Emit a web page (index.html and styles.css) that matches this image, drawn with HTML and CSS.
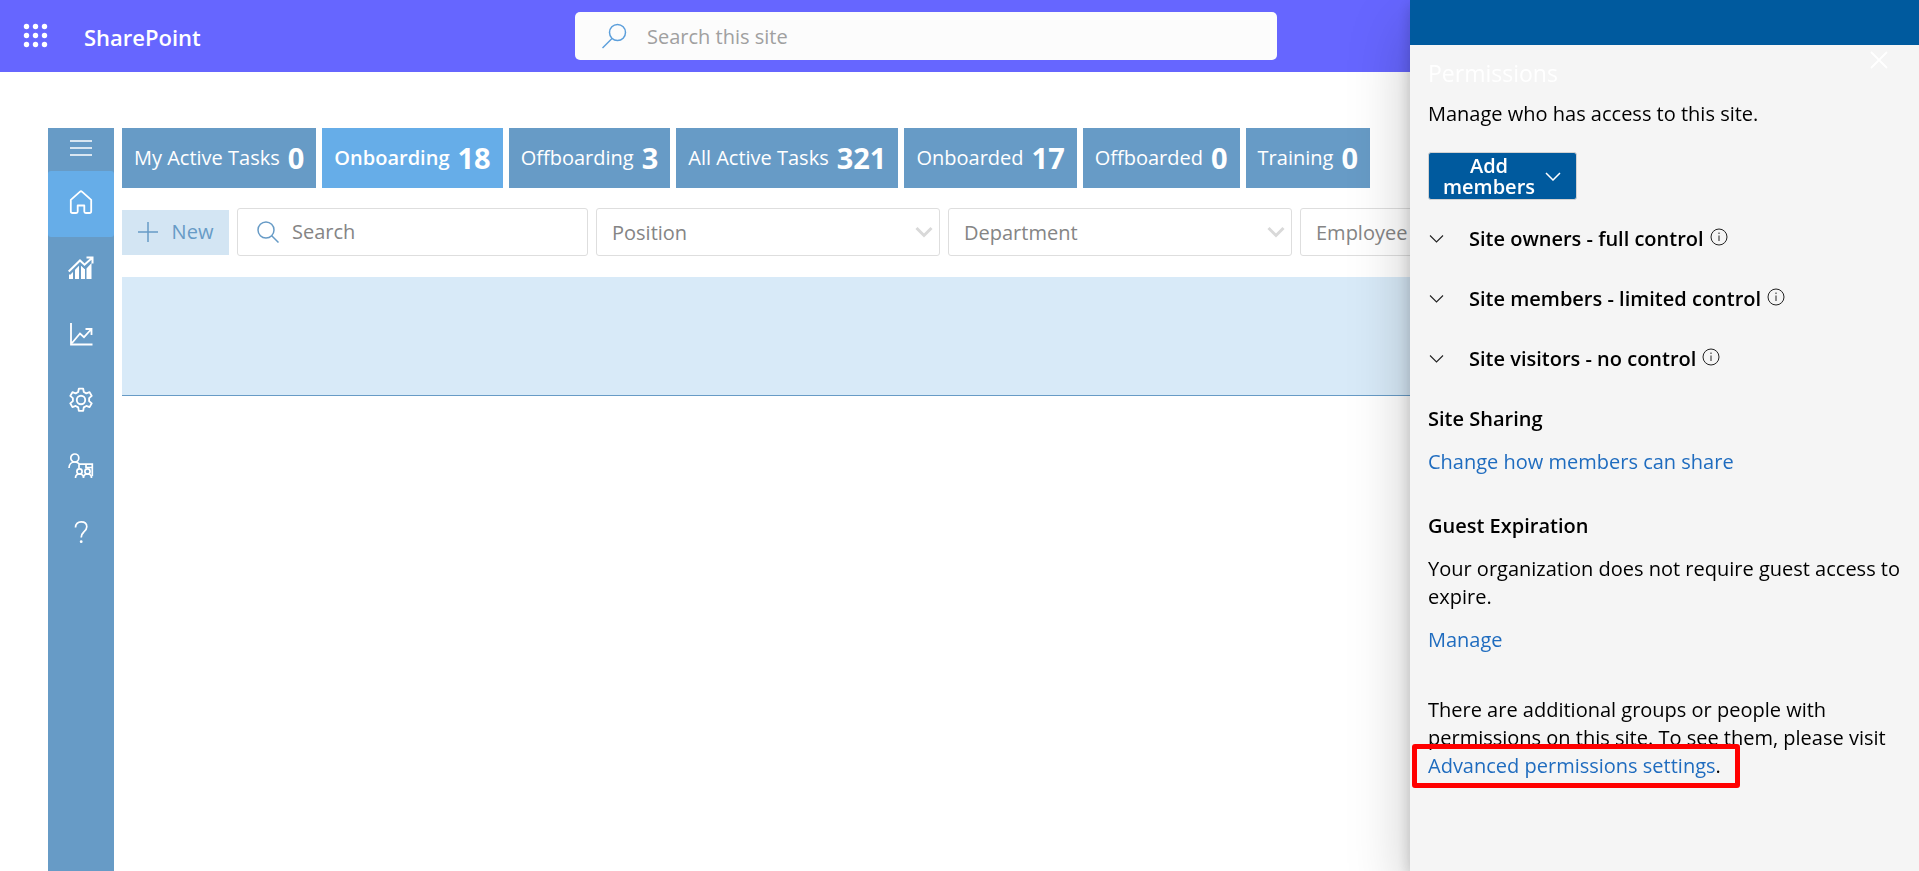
FILE: index.html
```html
<!DOCTYPE html>
<html lang="en">
<head>
<meta charset="utf-8">
<title>SharePoint</title>
<link rel="stylesheet" href="styles.css">
</head>
<body>
<header class="topbar">
  <button class="launcher" aria-label="App launcher">
    <svg width="26" height="26" viewBox="0 0 26 26" fill="#fff"><circle cx="3.5" cy="3.5" r="2.7"/><circle cx="12.5" cy="3.5" r="2.7"/><circle cx="21.5" cy="3.5" r="2.7"/><circle cx="3.5" cy="12.5" r="2.7"/><circle cx="12.5" cy="12.5" r="2.7"/><circle cx="21.5" cy="12.5" r="2.7"/><circle cx="3.5" cy="21.5" r="2.7"/><circle cx="12.5" cy="21.5" r="2.7"/><circle cx="21.5" cy="21.5" r="2.7"/></svg>
  </button>
  <a class="brand" href="#">SharePoint</a>
  <label class="site-search">
    <svg width="26" height="26" viewBox="0 0 26 26" fill="none" stroke="#5c9fdb" stroke-width="1.5"><circle cx="16.5" cy="9.5" r="8"/><path d="M11 15.5 1.500 25"/></svg>
    <input type="search" placeholder="Search this site" aria-label="Search this site">
  </label>
</header>

<div class="app">
  <nav class="rail" aria-label="Main">
    <button class="rail-item rail-menu" aria-label="Menu">
      <svg width="24" height="24" viewBox="0 0 24 24" stroke="#fff" stroke-width="1.5"><path d="M1 5h22M1 12h22M1 19h22"/></svg>
    </button>
    <a class="rail-item active" href="#" aria-label="Home">
      <svg width="24" height="24" viewBox="0 0 24 24" fill="none" stroke="#fff" stroke-width="1.8" stroke-linejoin="round"><path d="M1.800 9.800 10.800 1.800a1.800 1.800 0 0 1 2.400 0l9 8v11.400a1.800 1.800 0 0 1-1.800 1.800h-3.600a1.500 1.500 0 0 1-1.500-1.500v-6h-6.600v6a1.500 1.500 0 0 1-1.500 1.500H3.600a1.800 1.800 0 0 1-1.800-1.800z"/></svg>
    </a>
    <a class="rail-item" href="#" aria-label="Reports">
      <svg width="26" height="24" viewBox="0 0 26 24"><path fill="#fff" d="M1 19l4-4.500V23H1zM7 12.500l4-4V23H7zM13 9.500l4 3.500v10h-4zM18.500 12.500l5-5.500v16h-5z"/><path fill="none" stroke="#679bc6" stroke-width="5" d="M.500 17 12 5l4.500 4.500L23 3"/><path fill="none" stroke="#fff" stroke-width="2" d="M.700 15.500 12 4.500l4.500 4.200L24 2M18.500 1.500h6v6"/></svg>
    </a>
    <a class="rail-item" href="#" aria-label="Analytics">
      <svg width="24" height="24" viewBox="0 0 24 24" fill="none" stroke="#fff" stroke-width="1.8"><path d="M2 1v21.500h21.500M3 21l8-9.500 4 3.700 7-7.700M16.500 7h6v6"/></svg>
    </a>
    <a class="rail-item" href="#" aria-label="Settings">
      <svg width="26" height="26" viewBox="0 0 24 24" fill="none" stroke="#fff" stroke-width="1.7" stroke-linejoin="round"><circle cx="12" cy="12" r="3.9"/><path d="M10 1.500h4l.6 3.100 2.300 1.300 3-1.100 2 3.400-2.400 2.100v2.700l2.400 2.100-2 3.500-3-1.100-2.300 1.300-.6 3.200h-4l-.6-3.200-2.300-1.300-3 1.100-2-3.500 2.400-2.100v-2.700L2.100 8.200l2-3.400 3 1.100 2.300-1.300z"/></svg>
    </a>
    <a class="rail-item" href="#" aria-label="Training">
      <svg width="26" height="26" viewBox="0 0 26 26" fill="none" stroke="#fff" stroke-width="1.7"><circle cx="6.8" cy="5" r="4"/><path d="M1 15c0-3.500 2.500-6 5.800-6 2 0 3.400.8 4.700 2.200h12.800v12M11 11.500v4M18 11.500v3h6.300"/><circle cx="11.5" cy="18.5" r="2.6"/><circle cx="19.5" cy="18.5" r="2.6"/><path d="M7.500 25c0-2.500 1.700-4 4-4s4 1.500 4 4c0-2.500 1.700-4 4-4s4 1.500 4 4"/></svg>
    </a>
    <a class="rail-item" href="#" aria-label="Help">
      <svg width="24" height="24" viewBox="0 0 24 24" fill="none" stroke="#fff" stroke-width="1.7"><path d="M6.500 7.500C6.500 4 8.700 1.800 12.200 1.800c3.300 0 5.600 1.900 5.600 5 0 2.600-1.400 3.800-3 5.200-1.700 1.500-2.600 2.700-2.600 5.500"/><circle cx="12.2" cy="21.7" r="1.4" fill="#fff" stroke="none"/></svg>
    </a>
  </nav>

  <main class="content">
    <div class="tabs">
      <button class="tab">My Active Tasks <b>0</b></button>
      <button class="tab current">Onboarding <b>18</b></button>
      <button class="tab">Offboarding <b>3</b></button>
      <button class="tab">All Active Tasks <b>321</b></button>
      <button class="tab">Onboarded <b>17</b></button>
      <button class="tab">Offboarded <b>0</b></button>
      <button class="tab">Training <b>0</b></button>
    </div>

    <div class="filters">
      <button class="new">
        <svg width="20" height="20" viewBox="0 0 20 20" stroke="#679bc6" stroke-width="1.5"><path d="M10 0v20M0 10h20"/></svg>
        New
      </button>
      <label class="field search">
        <svg width="22" height="22" viewBox="0 0 22 22" fill="none" stroke="#679bc6" stroke-width="1.5"><circle cx="9" cy="9" r="8"/><path d="m14.700 14.700 6.800 6.800"/></svg>
        <input type="search" placeholder="Search" aria-label="Search">
      </label>
      <label class="field drop">
        <select aria-label="Position"><option>Position</option></select>
        <svg width="18" height="12" viewBox="0 0 18 12" fill="none" stroke="#d9d9d9" stroke-width="3"><path d="m1.500 2 7.500 7.500L16.500 2"/></svg>
      </label>
      <label class="field drop">
        <select aria-label="Department"><option>Department</option></select>
        <svg width="18" height="12" viewBox="0 0 18 12" fill="none" stroke="#d9d9d9" stroke-width="3"><path d="m1.500 2 7.500 7.500L16.500 2"/></svg>
      </label>
      <label class="field drop">
        <select aria-label="Employee"><option>Employee</option></select>
      </label>
    </div>
    <div class="list-head"></div>
  </main>
</div>

<aside class="panel" aria-labelledby="panel-title">
  <div class="panel-band"></div>
  <div class="panel-body">
    <div class="panel-top">
      <h1 class="panel-title" id="panel-title">Permissions</h1>
      <button class="close" aria-label="Close">
        <svg width="18" height="18" viewBox="0 0 18 18" stroke="#fff" stroke-width="1.8"><path d="m1 1 16 16M17 1 1 17"/></svg>
      </button>
    </div>
    <p class="lead">Manage who has access to this site.</p>
    <button class="add">
      <span>Add members</span>
      <svg width="16" height="9" viewBox="0 0 16 9" fill="none" stroke="#fff" stroke-width="1.5"><path d="m1 1 7 7 7-7"/></svg>
    </button>

    <div class="groups">
      <button class="group">
        <svg width="15" height="8" viewBox="0 0 15 8" fill="none" stroke="#222" stroke-width="1.1"><path d="m1 .500 6.500 6.500L14 .500"/></svg>
        <span>Site owners - full control</span>
        <svg class="info" width="18" height="18" viewBox="0 0 18 18" fill="none" stroke="#222"><circle cx="9" cy="9" r="8"/><path d="M9 7.500v5.500M9 4.500V6"/></svg>
      </button>
      <button class="group">
        <svg width="15" height="8" viewBox="0 0 15 8" fill="none" stroke="#222" stroke-width="1.1"><path d="m1 .500 6.500 6.500L14 .500"/></svg>
        <span>Site members - limited control</span>
        <svg class="info" width="18" height="18" viewBox="0 0 18 18" fill="none" stroke="#222"><circle cx="9" cy="9" r="8"/><path d="M9 7.500v5.500M9 4.500V6"/></svg>
      </button>
      <button class="group">
        <svg width="15" height="8" viewBox="0 0 15 8" fill="none" stroke="#222" stroke-width="1.1"><path d="m1 .500 6.500 6.500L14 .500"/></svg>
        <span>Site visitors - no control</span>
        <svg class="info" width="18" height="18" viewBox="0 0 18 18" fill="none" stroke="#222"><circle cx="9" cy="9" r="8"/><path d="M9 7.500v5.500M9 4.500V6"/></svg>
      </button>
    </div>

    <section class="block">
      <h2>Site Sharing</h2>
      <a href="#">Change how members can share</a>
    </section>
    <section class="block">
      <h2>Guest Expiration</h2>
      <p>Your organization does not require guest access to expire.</p>
      <a href="#">Manage</a>
    </section>
    <p class="more">There are additional groups or people with permissions on this site. To see them, please visit <span class="marked"><a href="#">Advanced permissions settings</a>.</span></p>
  </div>
</aside>
</body>
</html>
```

FILE: styles.css
```css
* { box-sizing: border-box; }

body {
  margin: 0;
  min-height: 100vh;
  display: flex;
  flex-direction: column;
  overflow-x: hidden;
  background: #fff;
  color: #000;
  font-family: "Open Sans", "Noto Sans", sans-serif;
  font-size: 20px;
  line-height: 28px;
}

button, input, select {
  font: inherit;
  color: inherit;
  border: 0;
  background: none;
  padding: 0;
  margin: 0;
}

svg { flex: none; display: block; }
a { text-decoration: none; }
h1, h2, p { margin: 0; font-size: inherit; }

/* Top bar */
.topbar {
  height: 72px;
  background: #6666ff;
  display: grid;
  grid-template-columns: 84px 491px 702px;
  align-items: center;
}
.launcher { padding-left: 23px; }
.brand {
  padding-top: 2px;
  color: #fff;
  font-size: 22px;
  font-weight: 600;
}
.site-search {
  height: 48px;
  padding: 0 26px;
  display: flex;
  align-items: center;
  gap: 20px;
  background: #fcfcfc;
  border-radius: 5px;
}
.site-search input { flex: 1; padding-top: 2px; outline: 0; }
.site-search input::placeholder { color: #a0a0a0; opacity: 1; }

/* App frame */
.app {
  flex: 1;
  display: flex;
  gap: 8px;
  padding: 56px 0 0 48px;
}
.rail {
  width: 66px;
  flex: none;
  background: #679bc6;
}
.rail-item {
  width: 100%;
  height: 66px;
  display: flex;
  align-items: center;
  justify-content: center;
  padding-bottom: 4px;
}
.rail-menu { height: 43px; }
.rail-item.active {
  background: #66ade8;
  border-radius: 3px;
}
.content { flex: 1; min-width: 0; }

.tabs { display: flex; gap: 6px; }
.tab {
  height: 60px;
  padding: 0 12px;
  display: flex;
  align-items: center;
  gap: 8px;
  background: #679bc6;
  color: #fff;
  white-space: nowrap;
}
.tab b { font-size: 29px; font-weight: 700; }
.tab.current { background: #66ade8; font-weight: 600; }

.filters {
  display: flex;
  align-items: center;
  gap: 8px;
  margin: 20px 0 21px;
}
.new {
  width: 107px;
  height: 45px;
  flex: none;
  display: flex;
  align-items: center;
  justify-content: center;
  gap: 14px;
  background: #d3e5f3;
  color: #679bc6;
}
.field {
  height: 48px;
  flex: none;
  display: flex;
  align-items: center;
  border: 1px solid #dedede;
  border-radius: 3px;
  background: #fff;
  color: #858585;
}
.search { width: 351px; padding: 0 19px; gap: 13px; }
.search input { flex: 1; min-width: 0; outline: 0; }
.search input::placeholder { color: #858585; opacity: 1; }
.drop { width: 344px; padding: 0 6px 0 15px; }
.drop select { flex: 1; padding-top: 2px; appearance: none; outline: 0; }

.list-head {
  height: 119px;
  background: #d8eaf8;
  border-bottom: 1px solid #679bc6;
}

/* Permissions panel, drawn over the page */
.panel {
  position: fixed;
  top: 0;
  right: 0;
  bottom: 0;
  width: 509px;
  background: #f5f5f5;
  box-shadow: 0 26px 58px rgba(0, 0, 0, .22), 0 5px 14px rgba(0, 0, 0, .18);
}
.panel-band { height: 45px; background: #005a9e; }
.panel-body { padding: 0 18px; }
.panel-top {
  display: flex;
  justify-content: space-between;
  padding: 6px 13px 0 0;
}
.panel-title {
  padding-top: 8px;
  color: #fff;
  font-size: 23px;
  font-weight: 400;
}
.close { align-self: flex-start; }
.lead { margin-top: 13px; }

.add {
  width: 149px;
  height: 48px;
  margin-top: 24px;
  padding: 0 15px 0 13px;
  display: flex;
  align-items: center;
  justify-content: space-between;
  background: #005a9e;
  border: 1px solid #d2d2d2;
  border-radius: 3px;
  color: #fff;
  font-weight: 600;
  line-height: 21px;
}
.add span { width: 94px; }

.groups {
  display: flex;
  flex-direction: column;
  gap: 32px;
  margin: 25px 0 32px;
}
.group {
  display: flex;
  align-items: center;
  padding-left: 1px;
  font-weight: 600;
}
.group span { margin: 0 6px 0 25px; }
.info { margin-bottom: 4px; }

.block {
  display: flex;
  flex-direction: column;
  align-items: flex-start;
  gap: 15px;
  margin-bottom: 36px;
}
.block h2 { font-weight: 600; }
.panel a { color: #1f6cbf; }
.more { margin-top: 42px; }
.marked { position: relative; display: inline-block; }
.marked::after {
  content: "";
  position: absolute;
  inset: -8px -19px -8px -16px;
  border: 5px solid #f00;
  border-radius: 3px;
}
```
